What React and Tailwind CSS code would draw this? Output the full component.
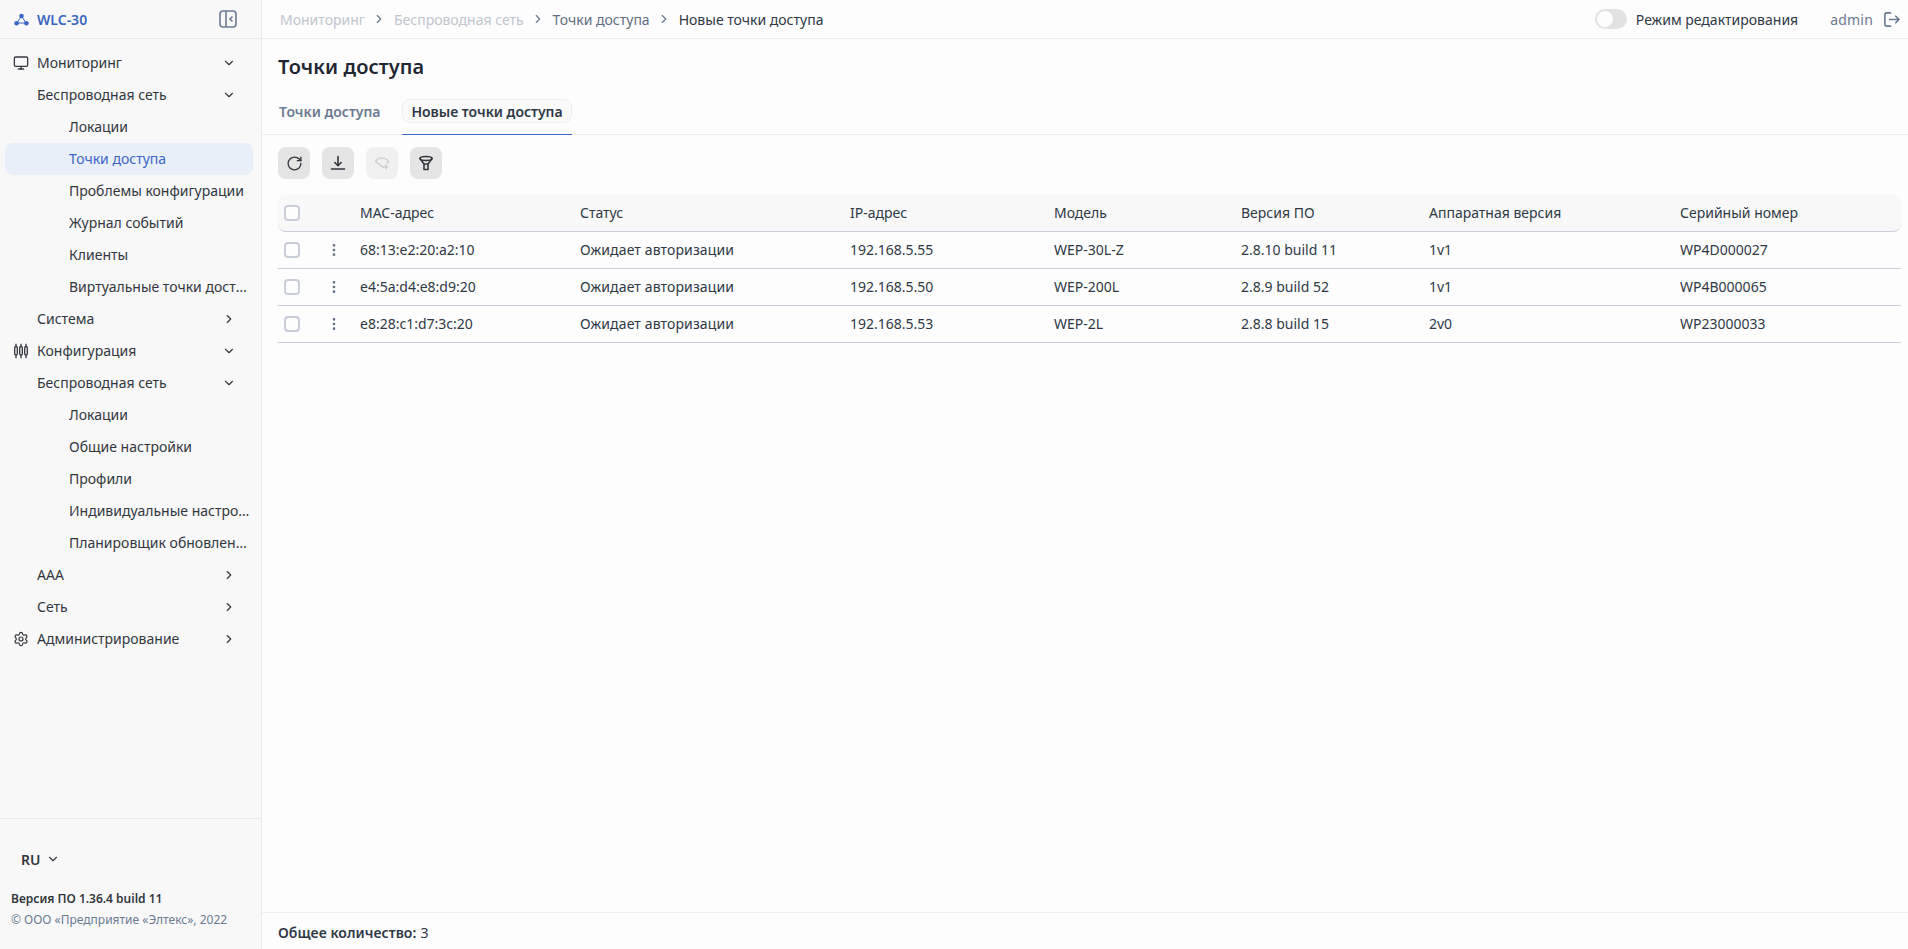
import React from "react";
import { ChevronDown, ChevronRight, Monitor, Settings, RotateCw, MoreVertical } from "lucide-react";

const Item = ({ level = 0, icon, label, arrow, active }) => (
  <div className={`flex items-center h-8 ml-[5px] mr-[8px] rounded-lg text-[14px] leading-5 ${active ? "bg-[#e8eff9] text-[#3b66c4]" : "text-[#33373d]"}`}>
    <div className={`shrink-0 flex items-center ${level === 2 ? "w-[64px]" : "w-[32px] pl-[8px]"}`}>{icon}</div>
    <span className={`truncate ${level === 2 ? "w-[182px]" : "w-[184px]"}`}>{label}</span>
    {arrow === "down" && <ChevronDown size={14} strokeWidth={2} className="text-[#33373d] ml-[1px]" />}
    {arrow === "right" && <ChevronRight size={14} strokeWidth={2} className="text-[#33373d] ml-[1px]" />}
  </div>
);

const Sliders = () => (
  <svg width="16" height="16" viewBox="0 0 16 16" fill="none" stroke="#33373d" strokeWidth="1.3">
    <path d="M3 .8v14.400M8 .8v14.400M13 .8v14.400" />
    <rect x="1.700" y="3.500" width="2.600" height="8.500" rx="1.300" fill="#f8f8f9" />
    <rect x="6.700" y="3.500" width="2.600" height="8.500" rx="1.300" fill="#f8f8f9" />
    <rect x="11.700" y="3.500" width="2.600" height="8.500" rx="1.300" fill="#f8f8f9" />
  </svg>
);

const Logo = () => (
  <svg width="15" height="13" viewBox="0 0 15 13" fill="none" stroke="#3b66c4" strokeWidth="1">
    <path d="M7.500 3 3 10h9z" />
    <circle cx="7.500" cy="3" r="2.300" fill="#3b66c4" stroke="none" />
    <circle cx="2.600" cy="10.200" r="2.300" fill="#3b66c4" stroke="none" />
    <circle cx="12.400" cy="10.200" r="2.300" fill="#3b66c4" stroke="none" />
  </svg>
);

const Check = () => <div className="w-4 h-4 rounded-[4px] border-2 border-[#c9ced8] bg-[#fdfdfd]" />;

const cols = ["w-[220px]", "w-[270px]", "w-[204px]", "w-[187px]", "w-[188px]", "w-[251px]", "flex-1"];

const rows = [
  ["68:13:e2:20:a2:10", "Ожидает авторизации", "192.168.5.55", "WEP-30L-Z", "2.8.10 build 11", "1v1", "WP4D000027"],
  ["e4:5a:d4:e8:d9:20", "Ожидает авторизации", "192.168.5.50", "WEP-200L", "2.8.9 build 52", "1v1", "WP4B000065"],
  ["e8:28:c1:d7:3c:20", "Ожидает авторизации", "192.168.5.53", "WEP-2L", "2.8.8 build 15", "2v0", "WP23000033"],
];
const head = ["MAC-адрес", "Статус", "IP-адрес", "Модель", "Версия ПО", "Аппаратная версия", "Серийный номер"];

const ToolBtn = ({ disabled, children }) => (
  <div className={`w-8 h-8 rounded-lg flex items-center justify-center ${disabled ? "bg-[#f0f0f0]" : "bg-[#e4e4e4]"}`}>{children}</div>
);

export default function App() {
  return (
    <div className="flex h-[949px] w-[1908px] overflow-hidden bg-[#fdfdfd] text-[#2f3845] text-[14px]" style={{ fontFamily: '"Noto Sans", sans-serif' }}>
      <aside className="w-[262px] shrink-0 bg-[#f8f8f9] border-r border-[#e8e9ec] flex flex-col">
        <div className="h-[38px] shrink-0 border-b border-[#e8e9ec] flex items-center pl-[14px] pr-[24px] box-content">
          <Logo />
          <span className="ml-[8px] text-[14px] font-semibold text-[#3b66c4]">WLC-30</span>
          <svg className="ml-auto" width="18" height="18" viewBox="0 0 18 18" fill="none" stroke="#6b7a90" strokeWidth="1.6">
            <rect x="1" y="1" width="16" height="16" rx="3" />
            <path d="M7 1v16M13.500 6.500 11 9l2.500 2.500" />
          </svg>
        </div>
        <nav className="flex-1 pt-[8px]">
          <Item icon={<Monitor size={16} strokeWidth={1.9} />} label="Мониторинг" arrow="down" />
          <Item level={1} label="Беспроводная сеть" arrow="down" />
          <Item level={2} label="Локации" />
          <Item level={2} label="Точки доступа" active />
          <Item level={2} label="Проблемы конфигурации" />
          <Item level={2} label="Журнал событий" />
          <Item level={2} label="Клиенты" />
          <Item level={2} label="Виртуальные точки доступа" />
          <Item level={1} label="Система" arrow="right" />
          <Item icon={<Sliders />} label="Конфигурация" arrow="down" />
          <Item level={1} label="Беспроводная сеть" arrow="down" />
          <Item level={2} label="Локации" />
          <Item level={2} label="Общие настройки" />
          <Item level={2} label="Профили" />
          <Item level={2} label="Индивидуальные настройки" />
          <Item level={2} label="Планировщик обновлений" />
          <Item level={1} label="AAA" arrow="right" />
          <Item level={1} label="Сеть" arrow="right" />
          <Item icon={<Settings size={16} strokeWidth={1.8} />} label="Администрирование" arrow="right" />
        </nav>
        <div className="h-[131px] shrink-0 border-t border-[#e8e9ec] pl-[11px]">
          <div className="flex items-center h-[20px] mt-[30px] pl-[10px] font-semibold text-[14px] text-[#33373d]">
            RU
            <ChevronDown size={14} strokeWidth={2} className="ml-[6px]" />
          </div>
          <div className="mt-[22px] text-[12px] leading-[16px] font-semibold text-[#33373d]">Версия ПО 1.36.4 build 11</div>
          <div className="mt-[5px] text-[12px] leading-[16px] text-[#6b7a90]">© ООО «Предприятие «Элтекс», 2022</div>
        </div>
      </aside>

      <main className="flex-1 min-w-0 flex flex-col">
        <header className="h-[39px] shrink-0 border-b border-[#eeeeef] flex items-center pl-[18px] pr-[8px] text-[14px]">
          <span className="text-[#c0c5ce]">Мониторинг</span>
          <ChevronRight size={14} strokeWidth={2} className="mx-[7.5px] text-[#6b7a90]" />
          <span className="text-[#c0c5ce]">Беспроводная сеть</span>
          <ChevronRight size={14} strokeWidth={2} className="mx-[7.5px] text-[#6b7a90]" />
          <span className="text-[#5f6d82]">Точки доступа</span>
          <ChevronRight size={14} strokeWidth={2} className="mx-[7.5px] text-[#6b7a90]" />
          <span className="text-[#2f3845]">Новые точки доступа</span>
          <div className="ml-auto flex items-center">
            <div className="w-8 h-[20px] rounded-full bg-[#e2e2e2] p-[2px] flex">
              <div className="w-4 h-4 rounded-full bg-[#fdfdfd]" />
            </div>
            <span className="ml-[9px]">Режим редактирования</span>
            <span className="ml-[32px] text-[#6b7a90] tracking-[0.2px]">admin</span>
            <svg className="ml-[10px]" width="17" height="17" viewBox="0 0 18 18" fill="none" stroke="#6b7a90" strokeWidth="1.7" strokeLinecap="round" strokeLinejoin="round">
              <path d="M8 2H4a2 2 0 0 0-2 2v10a2 2 0 0 0 2 2h4M7 9h10M13.500 5.500 17 9l-3.500 3.500" />
            </svg>
          </div>
        </header>

        <div className="flex-1 min-h-0">
          <h1 className="pl-[16px] mt-[14px] text-[20px] leading-[28px] font-semibold tracking-[0.1px] text-[#1f2733]">Точки доступа</h1>
          <div className="mt-[18px] h-[36px] pl-[16px] border-b border-[#eeeeef] flex text-[14px] font-semibold">
            <div className="h-[24px] flex items-center pl-[1px] w-[124px] text-[#6b7a90]">Точки доступа</div>
            <div className="h-[36px] w-[170px] border-b border-[#3b66c4]">
              <div className="h-[24px] rounded-lg border border-[#eeeeef] bg-[#fafafa] flex items-center justify-center text-[#2f3845]">Новые точки доступа</div>
            </div>
          </div>
          <div className="pl-[16px] mt-[12px] flex gap-[12px]">
            <ToolBtn><RotateCw size={17} strokeWidth={1.9} className="text-[#33373d]" /></ToolBtn>
            <ToolBtn>
              <svg width="16" height="16" viewBox="0 0 16 16" fill="none" stroke="#33373d" strokeWidth="1.6" strokeLinecap="round" strokeLinejoin="round">
                <path d="M8 1.500v9M4.800 7.500 8 10.700l3.200-3.200M1.500 14h13" />
              </svg>
            </ToolBtn>
            <ToolBtn disabled>
              <svg width="16" height="16" viewBox="0 0 16 16" fill="none" stroke="#c3c6cb" strokeWidth="1.200" strokeLinecap="round" strokeLinejoin="round">
                <path d="M9.500 12.500 1.500 6.500C3 4 6 3 8 3s5 1 6.500 3.500l-1.500 1.500M12 10v4M10 12h4" />
              </svg>
            </ToolBtn>
            <ToolBtn>
              <svg width="16" height="16" viewBox="0 0 16 16" fill="none" stroke="#33373d" strokeWidth="1.600" strokeLinecap="round" strokeLinejoin="round">
                <ellipse cx="8" cy="3.500" rx="6" ry="2" />
                <path d="M2 3.500 6 9v5.500h4V9l4-5.500M6 9h4" />
              </svg>
            </ToolBtn>
          </div>

          <div className="ml-[16px] mr-[7px] mt-[16px]">
            <div className="h-[37px] flex items-center bg-[#f8f8f8] rounded-lg border-b border-[#c9ced8]">
              <div className="w-[82px] shrink-0 pl-[6px]"><Check /></div>
              {head.map((h, i) => (
                <div key={h} className={`${cols[i]} ${i === 6 ? "" : "shrink-0"} truncate pb-[1px]`}>{h}</div>
              ))}
            </div>
            {rows.map((r) => (
              <div key={r[0]} className="h-[37px] flex items-center border-b border-[#c9ced8]">
                <div className="w-[82px] shrink-0 pl-[6px] flex items-center">
                  <Check />
                  <MoreVertical size={16} strokeWidth={2} className="ml-[26px] text-[#5f6d82]" />
                </div>
                {r.map((c, i) => (
                  <div key={i} className={`${cols[i]} ${i === 6 ? "" : "shrink-0"} truncate pb-[1px] ${i === 1 ? "tracking-[0.12px]" : ""}`}>{c}</div>
                ))}
              </div>
            ))}
          </div>
        </div>

        <footer className="h-[37px] shrink-0 border-t border-[#eeeeef] flex items-center pl-[16px] pt-[3px] text-[14px]">
          <span className="font-semibold tracking-[0.05px]">Общее количество:</span>
          <span className="ml-[4px]">3</span>
        </footer>
      </main>
    </div>
  );
}
